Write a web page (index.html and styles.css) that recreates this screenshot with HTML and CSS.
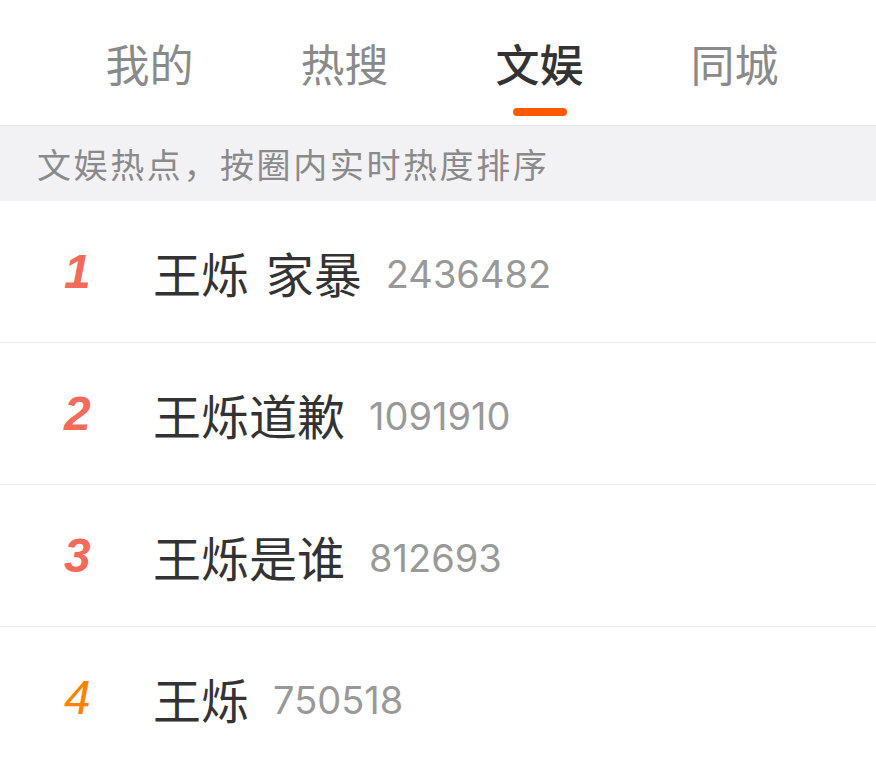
FILE: index.html
```html
<!DOCTYPE html>
<html lang="zh-CN">
<head>
<meta charset="utf-8">
<title>文娱</title>
<link rel="stylesheet" href="styles.css">
</head>
<body>
<div class="page">
  <nav class="tabs">
    <div class="tab">我的</div>
    <div class="tab">热搜</div>
    <div class="tab active">文娱<span class="indicator"></span></div>
    <div class="tab">同城</div>
  </nav>
  <div class="notice">文娱热点，按圈内实时热度排序</div>
  <ul class="list">
    <li class="row"><span class="rank top">1</span><span class="title">王烁 家暴</span><span class="count">2436482</span></li>
    <li class="row"><span class="rank top">2</span><span class="title">王烁道歉</span><span class="count">1091910</span></li>
    <li class="row"><span class="rank top">3</span><span class="title">王烁是谁</span><span class="count">812693</span></li>
    <li class="row"><span class="rank hot">4</span><span class="title">王烁</span><span class="count">750518</span></li>
  </ul>
</div>
</body>
</html>
```
FILE: styles.css
```css
* { box-sizing: border-box; }
html, body { margin: 0; padding: 0; background: #fff; }
body {
  font-family: "Noto Sans CJK SC", "Liberation Sans", sans-serif;
  width: 876px;
  height: 760px;
  overflow: hidden;
}
.tabs {
  display: flex;
  height: 126px;
  padding: 0 44px 0 52px;
  border-bottom: 1px solid #e6e6e6;
}
.tab {
  flex: 1;
  position: relative;
  text-align: center;
  font-size: 44px;
  line-height: 126px;
  color: #8a8a8a;
}
.tab.active {
  color: #333;
  font-weight: 500;
}
.indicator {
  position: absolute;
  left: 50%;
  top: 108px;
  width: 54px;
  height: 8px;
  margin-left: -27px;
  border-radius: 4px;
  background: #ff5a00;
}
.notice {
  height: 75px;
  background: #f2f2f5;
  padding-left: 37px;
  font-size: 34px;
  line-height: 75px;
  color: #8a8a8a;
  letter-spacing: 2.6px;
}
.list { list-style: none; margin: 0; padding: 0; }
.row {
  display: flex;
  align-items: center;
  height: 142px;
  border-bottom: 1px solid #ebebeb;
}
.rank {
  width: 153px;
  padding-left: 64px;
  font-family: "Liberation Sans", sans-serif;
  font-style: italic;
  font-size: 48px;
}
.rank.top { color: #f46b5c; font-weight: 700; }
.rank.hot { color: #ff8200; font-weight: 400; }
.title {
  font-size: 48px;
  color: #333;
  white-space: pre;
  word-spacing: 6px;
}
.count {
  margin-left: 24px;
  font-family: Inter, "Liberation Sans", sans-serif;
  font-variant-numeric: proportional-nums;
  font-size: 38px;
  color: #999;
  position: relative;
  top: 2px;
}
```
